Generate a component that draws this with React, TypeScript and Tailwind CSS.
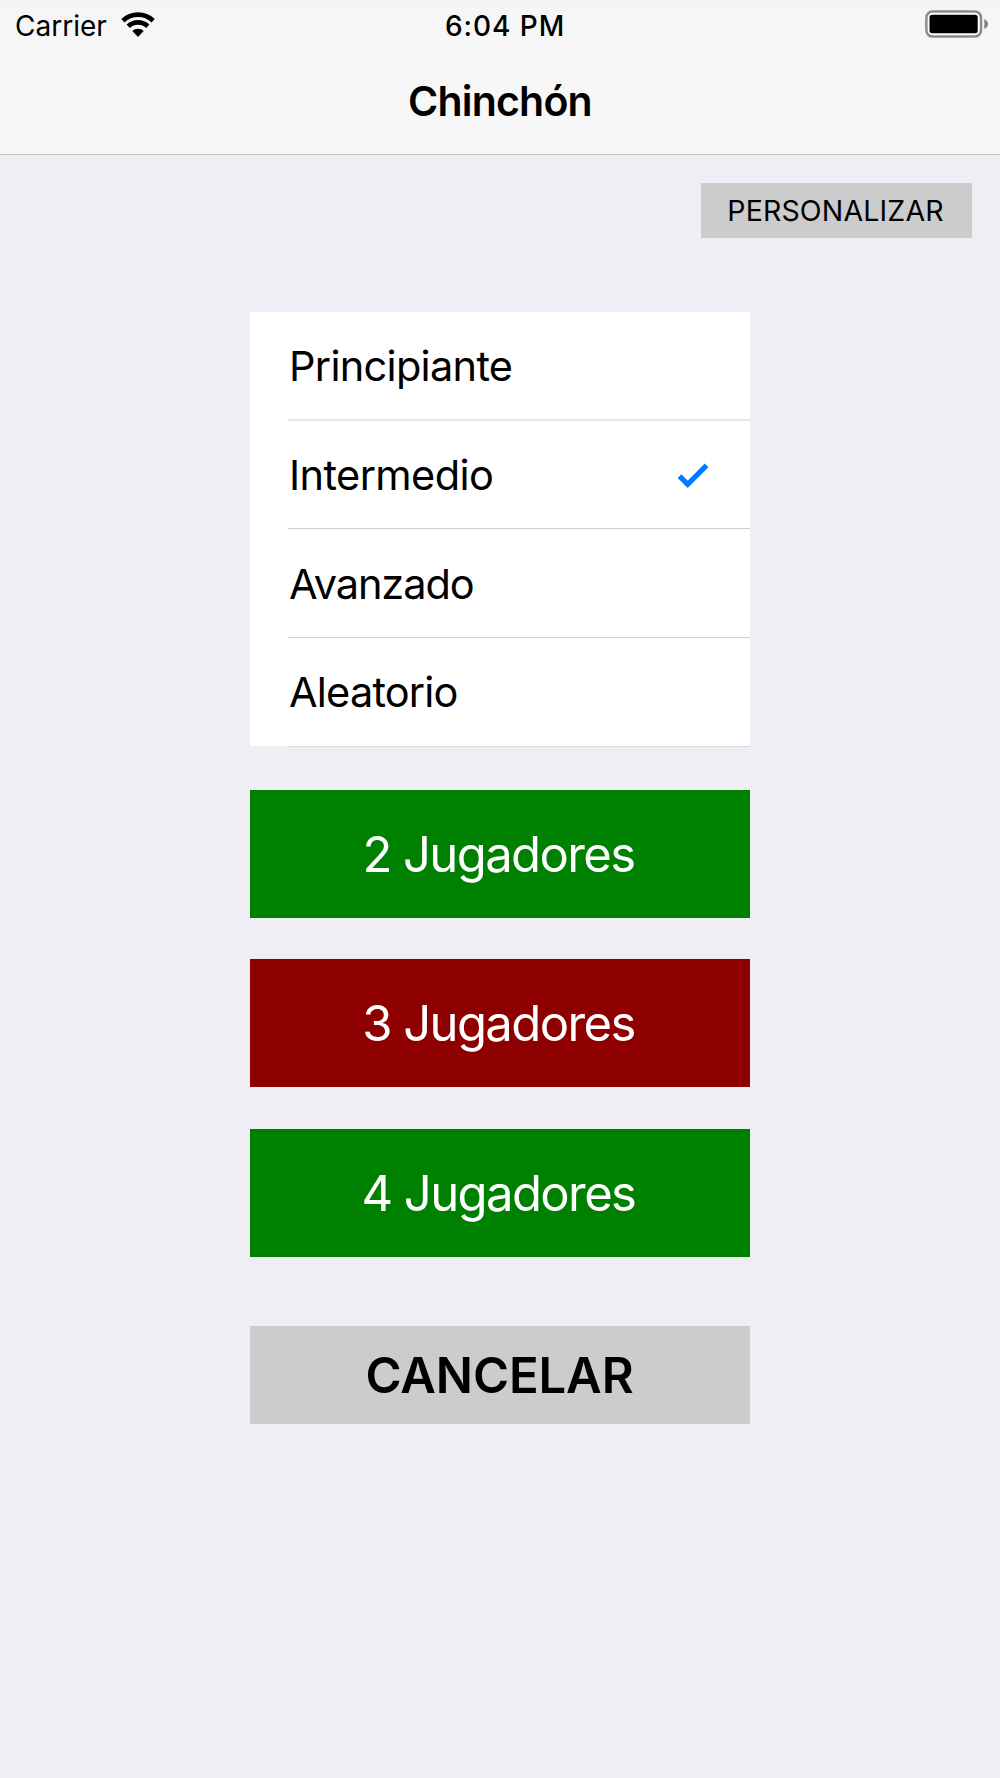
import clsx from 'clsx';

const levels = [
  { label: 'Principiante', row: 'h-[109px] border-b-2 border-[#e8e8ea]', text: 'leading-[108px] tracking-[-0.7px]' },
  { label: 'Intermedio', row: 'h-[108px] border-b border-[#cfced3]', text: 'leading-[108px] tracking-[-0.6px]', selected: true },
  { label: 'Avanzado', row: 'h-[109px] border-b border-[#d0d0d2]', text: 'leading-[110px] tracking-[-1.1px]' },
  { label: 'Aleatorio', row: 'h-[109px] border-b border-[#dbdadf]', text: 'leading-[109px] tracking-[-0.8px]' },
];

const players = [
  { label: '2 Jugadores', className: 'mt-[43px] bg-[#008000]' },
  { label: '3 Jugadores', className: 'mt-[41px] bg-[#8e0000]' },
  { label: '4 Jugadores', className: 'mt-[42px] bg-[#008000]' },
];

function WifiIcon() {
  return (
    <svg width="34" height="25" viewBox="0 0 34 25" fill="none" stroke="#000" strokeWidth="4.8">
      <path d="M1.9 8.7A22 22 0 0 1 32.1 8.7" />
      <path d="M7.2 14.3A14.2 14.2 0 0 1 26.8 14.3" />
      <path d="M17 25L11.3 19.1A8 8 0 0 1 22.7 19.1Z" fill="#000" stroke="none" />
    </svg>
  );
}

function BatteryIcon() {
  return (
    <svg width="64" height="28" viewBox="0 0 64 28">
      <rect x="1.4" y="1.4" width="54.6" height="25.2" rx="6.3" fill="#fff" stroke="#8c8c8c" strokeWidth="2.5" />
      <rect x="4.5" y="4.8" width="48.2" height="18.4" rx="2.6" fill="#000" />
      <path d="M59.3 9C64.2 11 64.2 17 59.3 19Z" fill="#808080" />
    </svg>
  );
}

function CheckIcon() {
  return (
    <svg
      width="32"
      height="26"
      viewBox="0 0 32 26"
      className="mt-[42px] mr-[41px]"
      fill="none"
      stroke="#007aff"
      strokeWidth="5.2"
    >
      <path d="M2.5 13.1L10.7 21.3L29.6 2.4" />
    </svg>
  );
}

export default function App() {
  return (
    <div className="flex min-h-[1778px] flex-col bg-[#efeef4] font-['Inter',sans-serif] text-black">
      {/* Header */}
      <header className="h-[155px] border-b border-[#bfbfc2] bg-linear-to-b from-[#f5f5f8] to-[#f7f7f7] to-40%">
        <div className="grid h-[52px] grid-cols-[445px_1fr_auto] text-[28px] leading-[52px]">
          <div className="flex pl-[15px]">
            <span className="w-[106px]">Carrier</span>
            <div className="pt-[12px]">
              <WifiIcon />
            </div>
          </div>
          <span className="font-medium tracking-[0.95px]">6:04 PM</span>
          <div className="pt-[10px] pr-[11px]">
            <BatteryIcon />
          </div>
        </div>
        <h1 className="text-center text-[41px] leading-[99px] font-semibold tracking-[-0.8px]">Chinchón</h1>
      </header>

      <button className="mt-[28px] mr-[28px] h-[55px] w-[271px] self-end bg-[#cccccc] pt-px pr-[2px] text-[28.5px] tracking-[0.15px]">
        PERSONALIZAR
      </button>

      <main className="mx-auto mt-[74px] flex w-[500px] flex-col">
        {/* Difficulty */}
        <ul className="bg-[linear-gradient(#fff,#fff)] bg-size-[100%_434px] bg-no-repeat pl-[38px] text-[41.5px]">
          {levels.map((level) => (
            <li key={level.label} className={clsx('flex justify-between pl-px', level.row)}>
              <span className={level.text}>{level.label}</span>
              {level.selected && <CheckIcon />}
            </li>
          ))}
        </ul>

        {players.map((player) => (
          <button
            key={player.label}
            className={clsx('h-[128px] pt-[2px] pr-[3px] text-[49px] tracking-[-1.6px] text-white', player.className)}
          >
            {player.label}
          </button>
        ))}

        <button className="mt-[69px] h-[98px] bg-[#cccccc] pt-px pr-px text-[49px] font-semibold tracking-[-0.1px]">
          CANCELAR
        </button>
      </main>
    </div>
  );
}
